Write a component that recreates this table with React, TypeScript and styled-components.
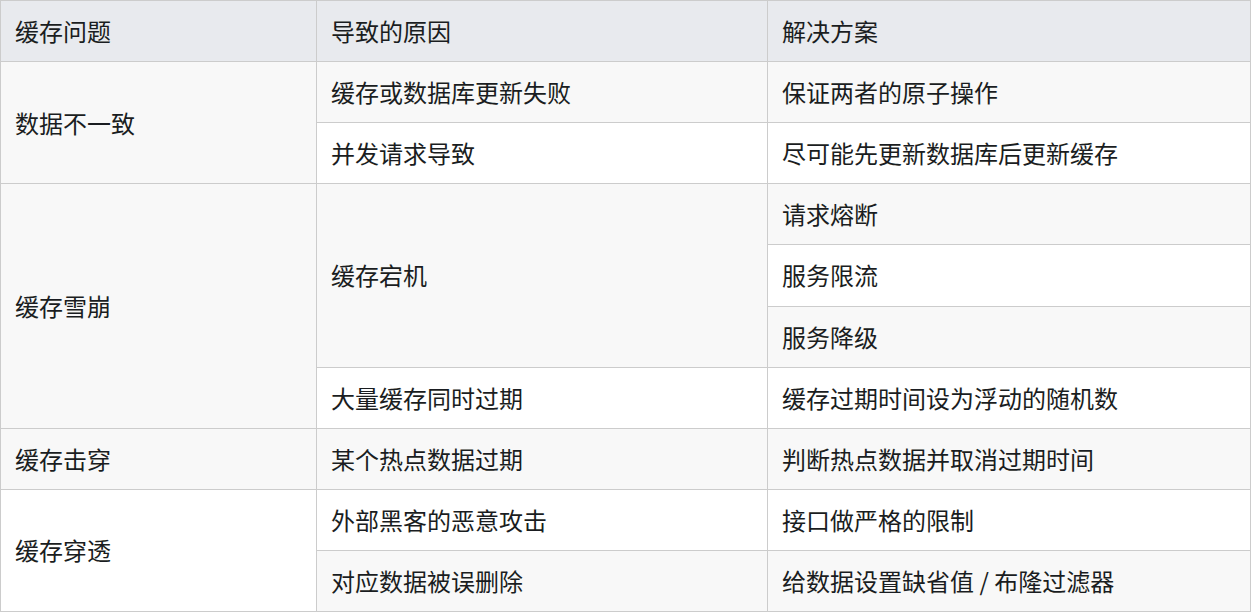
import React from "react";
import styled, { createGlobalStyle } from "styled-components";

const GlobalStyle = createGlobalStyle`
  html, body {
    margin: 0;
    padding: 0;
    background: #ffffff;
  }
  body {
    font-family: "Noto Sans CJK SC", "Noto Sans", sans-serif;
  }
`;

const Table = styled.table`
  width: 1250px;
  table-layout: fixed;
  border-collapse: collapse;
  font-family: "Noto Sans CJK SC", "Noto Sans", sans-serif;
  font-size: 24px;
  line-height: 36px;
  color: #1a1d21;
`;

const HeadRow = styled.tr`
  background: #e8eaee;
`;

const Row = styled.tr<{ $striped: boolean }>`
  background: ${(p) => (p.$striped ? "#f8f8f8" : "#ffffff")};
`;

const Th = styled.th`
  border: 1px solid #cccccc;
  padding: 12px 14px;
  text-align: left;
  font-weight: 400;
  white-space: nowrap;
`;

const Td = styled.td`
  border: 1px solid #cccccc;
  padding: 12px 14px;
  line-height: 36.12px;
  text-align: left;
  vertical-align: middle;
  white-space: nowrap;
`;

type Cell = { text: string; rowSpan?: number };
const rows: Cell[][] = [
  [{ text: "数据不一致", rowSpan: 2 }, { text: "缓存或数据库更新失败" }, { text: "保证两者的原子操作" }],
  [{ text: "并发请求导致" }, { text: "尽可能先更新数据库后更新缓存" }],
  [{ text: "缓存雪崩", rowSpan: 4 }, { text: "缓存宕机", rowSpan: 3 }, { text: "请求熔断" }],
  [{ text: "服务限流" }],
  [{ text: "服务降级" }],
  [{ text: "大量缓存同时过期" }, { text: "缓存过期时间设为浮动的随机数" }],
  [{ text: "缓存击穿" }, { text: "某个热点数据过期" }, { text: "判断热点数据并取消过期时间" }],
  [{ text: "缓存穿透", rowSpan: 2 }, { text: "外部黑客的恶意攻击" }, { text: "接口做严格的限制" }],
  [{ text: "对应数据被误删除" }, { text: "给数据设置缺省值 / 布隆过滤器" }],
];

export default function App() {
  return (
    <>
      <GlobalStyle />
      <Table>
        <colgroup>
          <col style={{ width: 316 }} />
          <col style={{ width: 451 }} />
          <col style={{ width: 483 }} />
        </colgroup>
        <thead>
          <HeadRow>
            <Th>缓存问题</Th>
            <Th>导致的原因</Th>
            <Th>解决方案</Th>
          </HeadRow>
        </thead>
        <tbody>
          {rows.map((r, i) => (
            <Row key={i} $striped={i % 2 === 0}>
              {r.map((c, j) => (
                <Td key={j} rowSpan={c.rowSpan}>
                  {c.text}
                </Td>
              ))}
            </Row>
          ))}
        </tbody>
      </Table>
    </>
  );
}
